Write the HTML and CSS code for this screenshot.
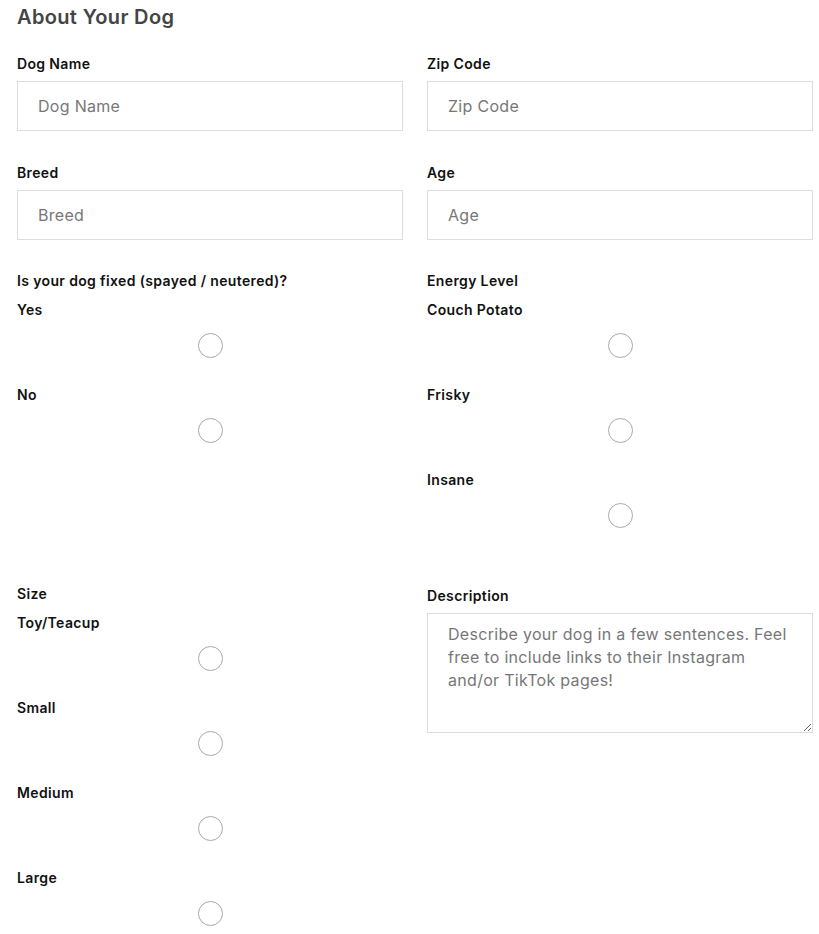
FILE: index.html
```html
<!DOCTYPE html>
<html lang="en">
<head>
<meta charset="utf-8">
<title>About Your Dog</title>
<link rel="stylesheet" href="styles.css">
</head>
<body>
<form class="dog-form">
  <h2 class="form-title">About Your Dog</h2>
  <div class="grid">
    <div class="field">
      <label class="label" for="dogname">Dog Name</label>
      <input class="input" id="dogname" type="text" placeholder="Dog Name">
    </div>
    <div class="field">
      <label class="label" for="zip">Zip Code</label>
      <input class="input" id="zip" type="text" placeholder="Zip Code">
    </div>
    <div class="field">
      <label class="label" for="breed">Breed</label>
      <input class="input" id="breed" type="text" placeholder="Breed">
    </div>
    <div class="field">
      <label class="label" for="age">Age</label>
      <input class="input" id="age" type="text" placeholder="Age">
    </div>
    <div class="group">
      <div class="label">Is your dog fixed (spayed / neutered)?</div>
      <div class="option"><label class="label" for="fy">Yes</label><input class="radio" type="radio" name="fixed" id="fy"></div>
      <div class="option"><label class="label" for="fn">No</label><input class="radio" type="radio" name="fixed" id="fn"></div>
    </div>
    <div class="group">
      <div class="label">Energy Level</div>
      <div class="option"><label class="label" for="e1">Couch Potato</label><input class="radio" type="radio" name="energy" id="e1"></div>
      <div class="option"><label class="label" for="e2">Frisky</label><input class="radio" type="radio" name="energy" id="e2"></div>
      <div class="option"><label class="label" for="e3">Insane</label><input class="radio" type="radio" name="energy" id="e3"></div>
    </div>
    <div class="group">
      <div class="label">Size</div>
      <div class="option"><label class="label" for="s1">Toy/Teacup</label><input class="radio" type="radio" name="size" id="s1"></div>
      <div class="option"><label class="label" for="s2">Small</label><input class="radio" type="radio" name="size" id="s2"></div>
      <div class="option"><label class="label" for="s3">Medium</label><input class="radio" type="radio" name="size" id="s3"></div>
      <div class="option"><label class="label" for="s4">Large</label><input class="radio" type="radio" name="size" id="s4"></div>
    </div>
    <div class="field desc">
      <label class="label" for="desc">Description</label>
      <textarea class="textarea" id="desc" placeholder="Describe your dog in a few sentences. Feel free to include links to their Instagram and/or TikTok pages!"></textarea>
    </div>
  </div>
</form>
</body>
</html>
```
FILE: styles.css
```css
html, body {
  margin: 0;
  padding: 0;
  background: #fff;
}
body {
  font-family: Inter, "Open Sans", "Liberation Sans", sans-serif;
}
.dog-form {
  padding: 5px 6px 0 17px;
}
.form-title {
  margin: 0 0 25px;
  font-size: 20px;
  line-height: 24px;
  font-weight: 600;
  letter-spacing: 0.35px;
  color: #444;
}
.grid {
  display: grid;
  grid-template-columns: 386px 386px;
  column-gap: 24px;
  align-items: start;
}
.field {
  display: flex;
  flex-direction: column;
  margin-bottom: 32px;
}
.label {
  display: block;
  font-size: 14px;
  line-height: 20px;
  font-weight: 600;
  letter-spacing: 0.36px;
  color: #111;
}
.field .label {
  margin-bottom: 7px;
}
.input {
  box-sizing: border-box;
  height: 50px;
  border: 1px solid #ddd;
  padding: 0 20px;
  font-family: inherit;
  font-size: 16px;
  letter-spacing: 0.3px;
  color: #333;
  margin: 0;
  outline: none;
}
.input::placeholder,
.textarea::placeholder {
  color: #777;
}
.group {
  display: flex;
  flex-direction: column;
  margin-top: -1px;
  margin-bottom: 30px;
}
.group > .label {
  margin-bottom: 9px;
}
.option {
  display: flex;
  flex-direction: column;
  align-items: center;
}
.option .label {
  align-self: flex-start;
}
.radio {
  appearance: none;
  -webkit-appearance: none;
  box-sizing: border-box;
  width: 25px;
  height: 25px;
  border: 1px solid #aaa;
  border-radius: 50%;
  margin: 13px 0 27px;
  background: #fff;
}
.desc {
  margin-top: 1px;
}
.textarea {
  box-sizing: border-box;
  height: 120px;
  border: 1px solid #ddd;
  padding: 9px 20px;
  font-family: inherit;
  font-size: 16px;
  line-height: 23px;
  letter-spacing: 0.3px;
  color: #333;
  margin: 0;
  resize: vertical;
  outline: none;
}
```
